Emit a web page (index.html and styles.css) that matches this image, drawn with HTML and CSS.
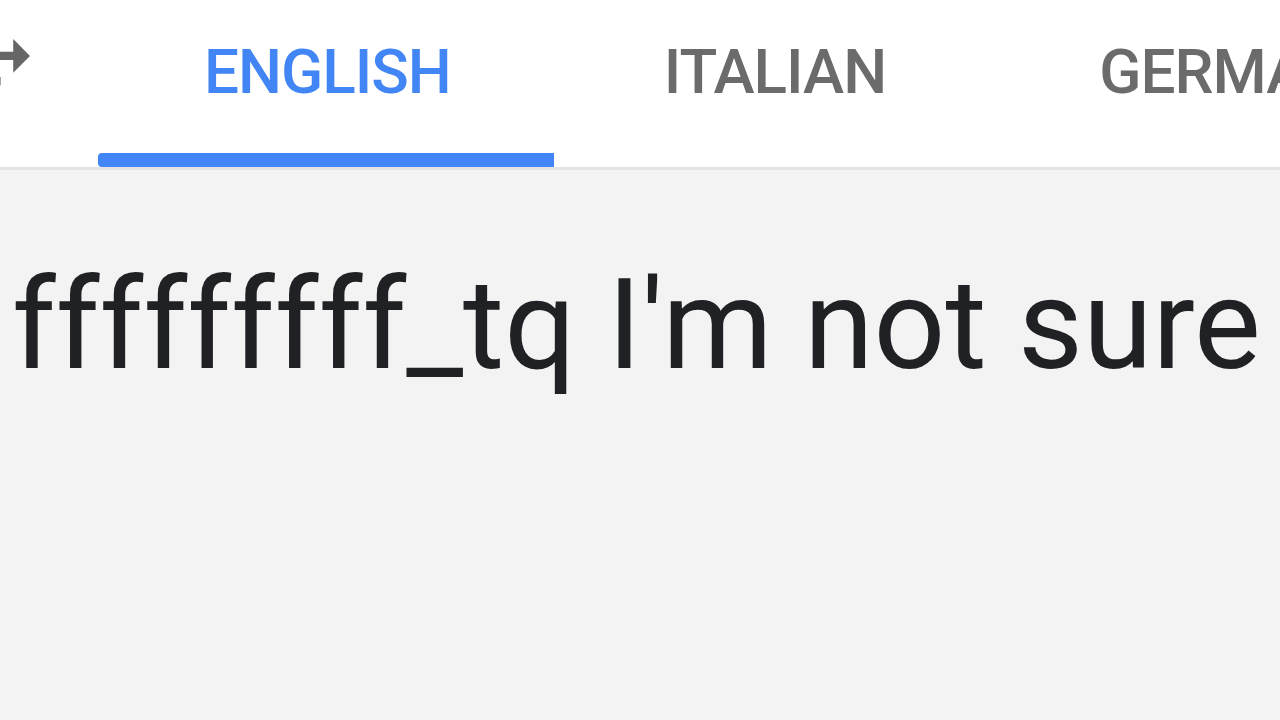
FILE: index.html
```html
<!DOCTYPE html>
<html lang="en">
<head>
    <meta charset="UTF-8">
    <meta name="viewport" content="width=device-width, initial-scale=1.0">
    <title>Translate</title>
    <link rel="stylesheet" href="styles.css">
</head>
<body>
    <div class="header">
        <div class="swap">
            <svg class="swap-icon" viewBox="13.86 0 7.14 24" width="30" height="101">
                <path d="M6.99 11L3 15l3.99 4v-3H14v-2H6.99v-3zM21 9l-3.99-4v3H10v2h7.01v3L21 9z"/>
            </svg>
        </div>
        <div class="tabs">
            <div class="tab active">
                <div class="tab-label">ENGLISH</div>
                <div class="tab-indicator"></div>
            </div>
            <div class="tab">
                <div class="tab-label">ITALIAN</div>
            </div>
            <div class="tab">
                <div class="tab-label">GERMAN</div>
            </div>
        </div>
    </div>

    <div class="source">
        <div class="source-text">fffffffff_tq I'm not sure</div>
    </div>
</body>
</html>
```

FILE: styles.css
```css
html, body {
    height: 100%;
}

body {
    margin: 0;
    font-family: Roboto, "Noto Sans", Arial, sans-serif;
    background-color: #f3f3f3;
    overflow: hidden;
}

.header {
    display: flex;
    height: 167px;
    background-color: #fff;
    border-bottom: 3px solid #e3e3e3;
    white-space: nowrap;
}

.swap {
    width: 98px;
    flex-shrink: 0;
}

.swap-icon {
    display: block;
    margin-top: 18px;
    fill: #666;
}

.tabs {
    display: flex;
    gap: 4px;
}

.tab {
    flex-shrink: 0;
    display: flex;
    flex-direction: column;
    height: 167px;
    font-size: 62px;
    font-weight: 500;
    letter-spacing: -1px;
    color: #6b6b6b;
}

.tab-label {
    flex: 1;
    padding: 30px 103px 0 106px;
    line-height: 84px;
}

.tab-indicator {
    height: 14px;
    background-color: #4285f4;
    border-radius: 4px 0 0 4px;
}

.tab.active {
    color: #4285f4;
}

.source {
    padding-left: 12px;
}

.source-text {
    font-size: 126px;
    line-height: 150px;
    padding-top: 80px;
    color: #202124;
    white-space: nowrap;
}
```
